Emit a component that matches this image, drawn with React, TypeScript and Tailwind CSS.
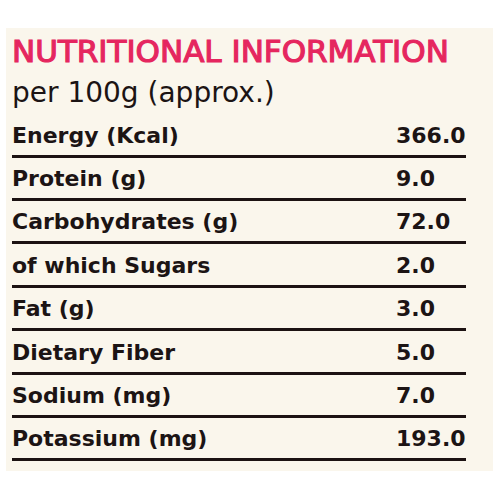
const rows = [
  { label: "Energy (Kcal)", value: "366.0" },
  { label: "Protein (g)", value: "9.0" },
  { label: "Carbohydrates (g)", value: "72.0" },
  { label: "of which Sugars", value: "2.0" },
  { label: "Fat (g)", value: "3.0" },
  { label: "Dietary Fiber", value: "5.0" },
  { label: "Sodium (mg)", value: "7.0" },
  { label: "Potassium (mg)", value: "193.0" },
]

export default function App() {
  return (
    <div className="w-[500px] h-[500px] bg-white pt-[28px] pl-[6px] font-['DejaVu_Sans',sans-serif]">
      <div className="w-[487px] h-[443px] bg-[#faf6ec] pl-[6px] pt-[8px]">
        <h1 className="text-[31px] leading-none text-[#e5265f] [-webkit-text-stroke:1.2px_#e5265f]">
          NUTRITIONAL INFORMATION
        </h1>
        <p className="mt-[11.5px] text-[28px] leading-none text-[#1c1414]">per 100g (approx.)</p>

        <div className="mt-[7.8px] w-[454px]">
          {rows.map((row) => (
            <div
              key={row.label}
              className="flex items-end h-[43.4px] pb-[8px] border-b-[3px] border-[#1c1212] text-[22px] leading-none font-bold text-[#1c1414]"
            >
              <span className="w-[384px]">{row.label}</span>
              <span>{row.value}</span>
            </div>
          ))}
        </div>
      </div>
    </div>
  )
}
